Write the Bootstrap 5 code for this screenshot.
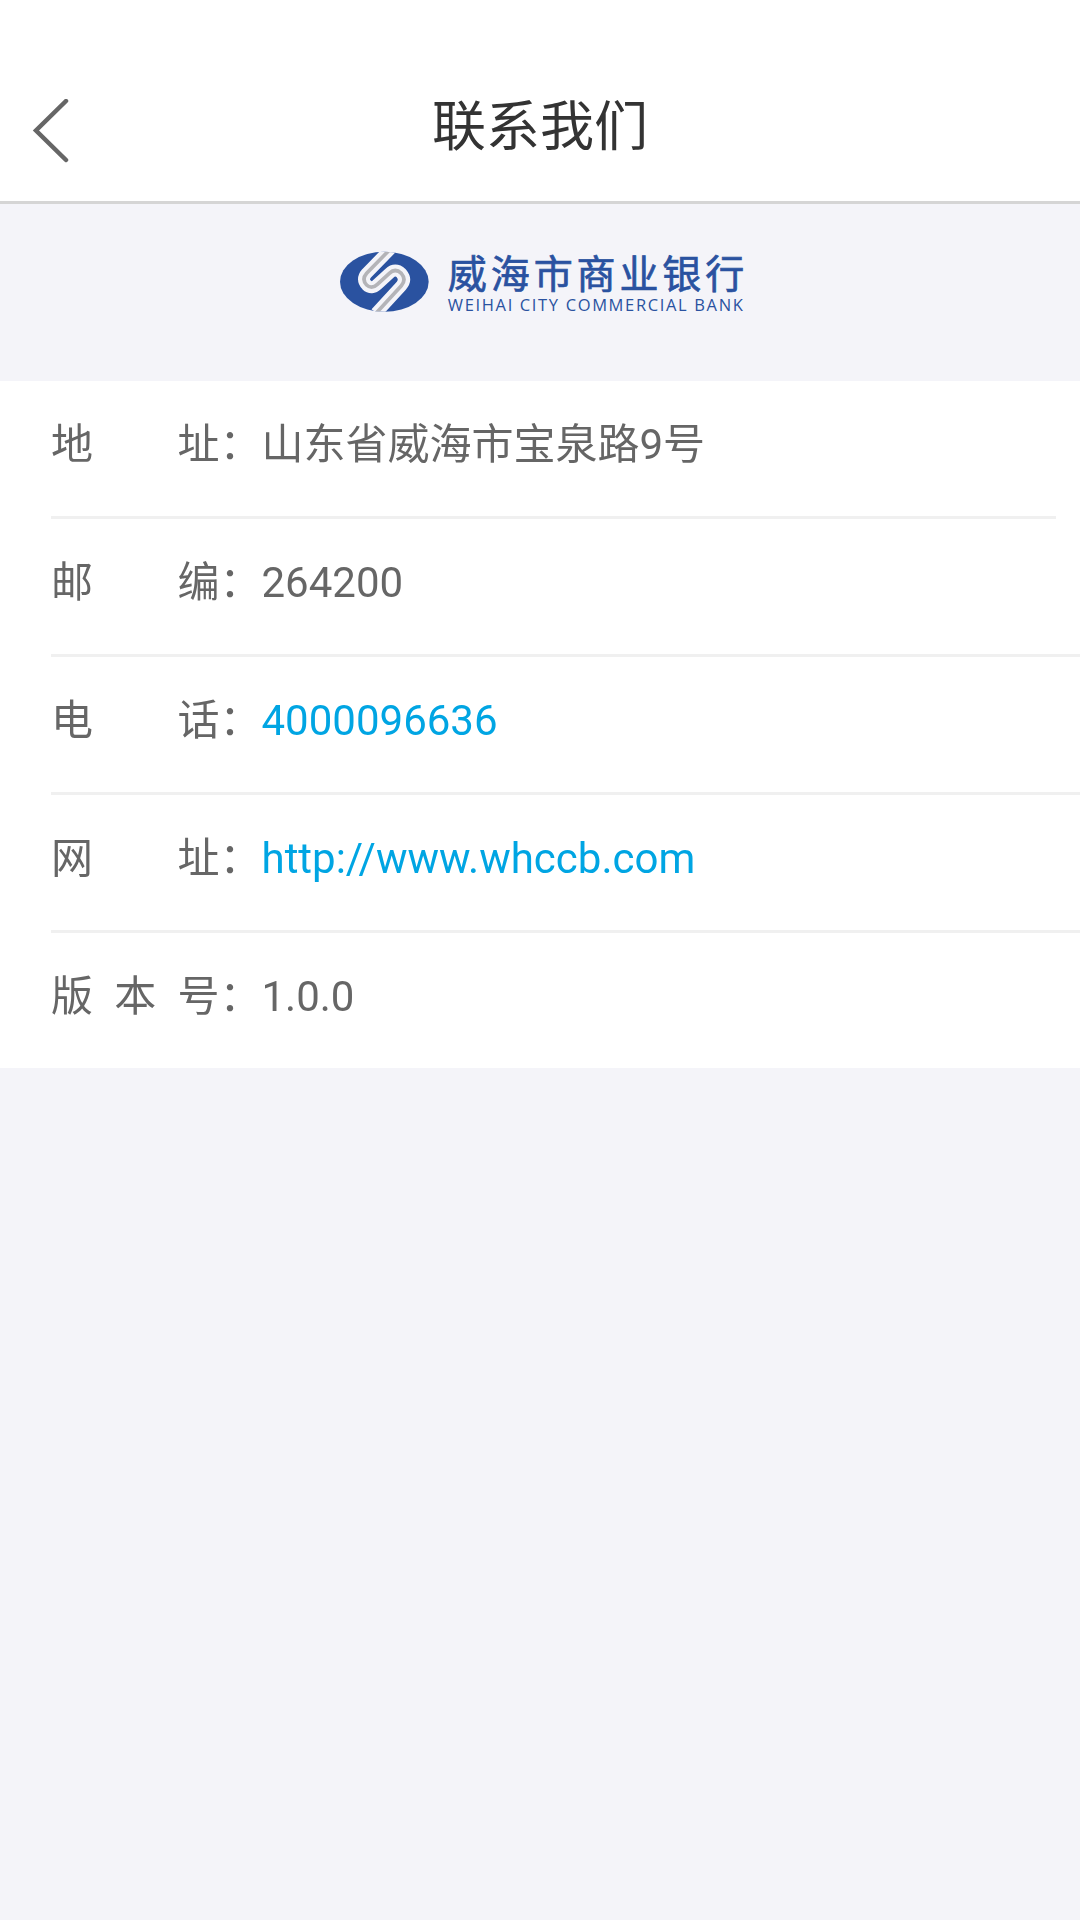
<!DOCTYPE html>
<html lang="zh"><head><meta charset="utf-8">
<link href="https://cdn.jsdelivr.net/npm/bootstrap@5.3.0/dist/css/bootstrap.min.css" rel="stylesheet">
<style>
html,body{height:100%}
body{background:#f4f4f9;font-family:Roboto,"Noto Sans CJK SC",sans-serif;color:#666;font-size:42px;min-height:1920px}
.topbar{height:204px;background:#fff;border-bottom:3px solid #d5d5d5;padding-top:64px}
.backbtn{left:32px;top:99px;width:40px;height:64px}
.pagetitle{font-size:54px;line-height:64px;color:#333;padding-top:32px;will-change:opacity}
.logozone{height:177px;padding-top:46px;padding-left:8px}
.logomark{width:89px;height:62px}
.logotext{margin-left:19px}
.logoname{font-family:"Noto Sans CJK SC",sans-serif;font-weight:400;-webkit-text-stroke:.7px #2a52a0;font-size:39px;line-height:42px;color:#2a52a0;letter-spacing:3.900px;white-space:nowrap}
.logoen{font-family:"Open Sans",sans-serif;font-size:16.500px;line-height:18px;color:#2a52a0;letter-spacing:1.640px;white-space:nowrap;margin-top:4px}
.infolist{background:#fff}
.inforow{height:138px;margin-left:51px;border-bottom:3px solid #f0f0f0;line-height:50px;padding-top:39px;will-change:opacity}
.inforow.shortline{margin-right:24px}
.inforow.lastrow{height:135px;border-bottom:0}
.rowlabel{width:210.500px;flex:none}
.lab3{width:42px;flex:none;margin-right:21.250px}
.infolink{color:#00a5e3;text-decoration:none}
</style></head><body>
<header class="topbar position-relative text-center">
<svg class="backbtn position-absolute" viewBox="0 0 40 64" fill="none" stroke="#666" stroke-width="4.5" stroke-linecap="round" stroke-linejoin="miter"><path d="M34 2 4 31.500 34 61"/></svg>
<div class="pagetitle">联系我们</div>
</header>
<section class="logozone d-flex justify-content-center align-items-start">
<div class="d-flex">
<svg class="logomark" viewBox="12 15 267 186" fill="none">
<defs><clipPath id="ovalclip"><ellipse cx="145" cy="110" rx="133" ry="90"/></clipPath></defs>
<ellipse cx="145" cy="110" rx="133" ry="90" fill="#2a52a0"/>
<g clip-path="url(#ovalclip)">
<path d="M165 10 92 85Q76 103 92 120 107 134 124 118L160 85Q178 68 196 85 212 104 196 122L120 205" stroke="#f4f4f9" stroke-width="36"/>
<path d="M165 10 92 85Q76 103 92 120 107 134 124 118L160 85Q178 68 196 85 212 104 196 122L120 205" stroke="#b4b4b8" stroke-width="11"/>
</g>
</svg>
<div class="logotext"><div class="logoname">威海市商业银行</div><div class="logoen">WEIHAI CITY COMMERCIAL BANK</div></div>
</div>
</section>
<main class="infolist">
<div class="inforow shortline d-flex"><div class="rowlabel d-flex"><span class="lab3">地</span><span class="lab3"></span><span>址：</span></div><div>山东省威海市宝泉路9号</div></div>
<div class="inforow d-flex"><div class="rowlabel d-flex"><span class="lab3">邮</span><span class="lab3"></span><span>编：</span></div><div>264200</div></div>
<div class="inforow d-flex"><div class="rowlabel d-flex"><span class="lab3">电</span><span class="lab3"></span><span>话：</span></div><a class="infolink" href="#">4000096636</a></div>
<div class="inforow d-flex"><div class="rowlabel d-flex"><span class="lab3">网</span><span class="lab3"></span><span>址：</span></div><a class="infolink" href="#">http://www.whccb.com</a></div>
<div class="inforow lastrow d-flex"><div class="rowlabel d-flex"><span class="lab3">版</span><span class="lab3">本</span><span>号：</span></div><div>1.0.0</div></div>
</main>
<script src="https://cdn.jsdelivr.net/npm/bootstrap@5.3.0/dist/js/bootstrap.bundle.min.js"></script>
</body></html>
